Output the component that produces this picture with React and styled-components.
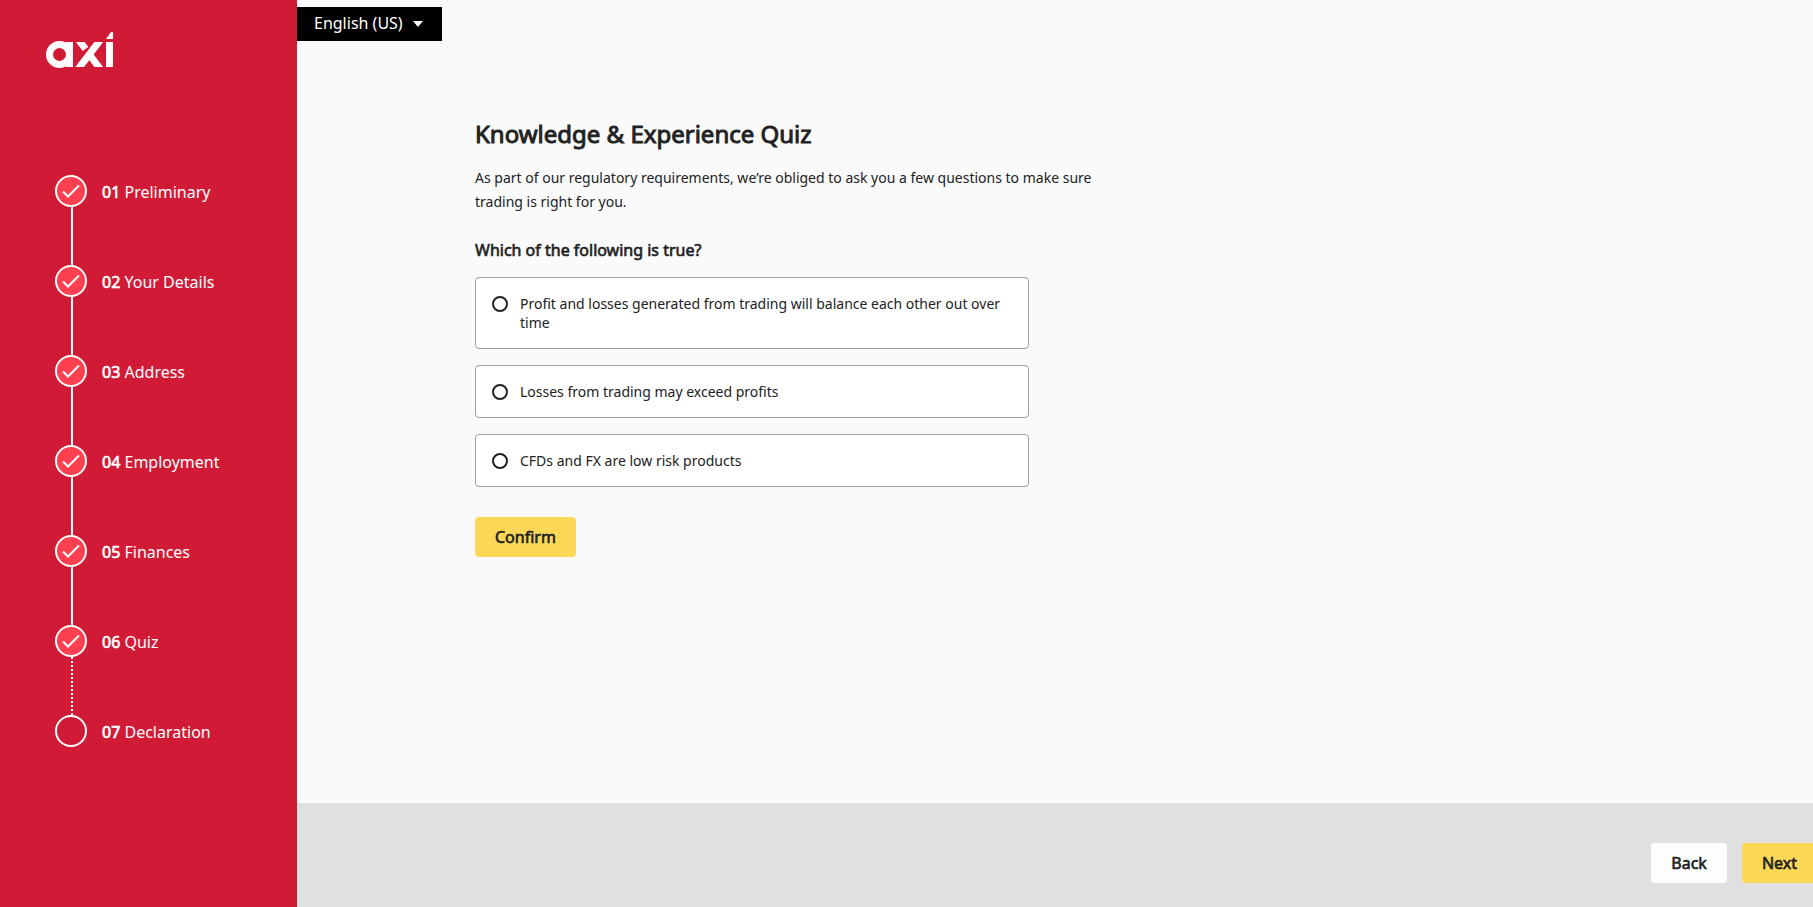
import React, { useState } from 'react';
import styled, { createGlobalStyle } from 'styled-components';

const color = {
  brand: '#d11b36',
  brandLight: '#ff4050',
  action: '#fdd756',
  text: '#222222',
  border: '#a0a0a0',
  page: '#fafafa',
  footer: '#e0e0e0',
};

const GlobalStyle = createGlobalStyle`
  * {
    box-sizing: border-box;
  }

  body {
    margin: 0;
    background: ${color.page};
    color: ${color.text};
    font-family: 'Noto Sans', sans-serif;
    font-size: 16px;
  }

  button, input, select {
    font-family: inherit;
    font-size: inherit;
  }
`;

const Page = styled.div`
  display: flex;
  min-height: 100vh;
  overflow: hidden;
`;

const Sidebar = styled.aside`
  flex: 0 0 297px;
  padding: 32px 45px;
  background: ${color.brand};
  color: #fff;
`;

const Logo = styled.svg`
  display: block;
  width: 70px;
  height: 37px;
`;

const StepList = styled.ol`
  margin: 0;
  padding: 106px 10px 0;
  list-style: none;
`;

const StepItem = styled.li`
  display: grid;
  grid-template-columns: 32px 1fr;
  column-gap: 15px;
`;

const StepMark = styled.span`
  display: flex;
  align-items: center;
  justify-content: center;
  width: 32px;
  height: 32px;
  border: 2px solid #fff;
  border-radius: 50%;
  background: ${props => (props.$done ? color.brandLight : 'transparent')};
`;

const StepLabel = styled.span`
  height: 32px;
  line-height: 34px;
`;

const StepLine = styled.span`
  height: 58px;
  margin-left: 16px;
  border-left: 2px ${props => (props.$dotted ? 'dotted' : 'solid')} #fff;
`;

const Strong = styled.span`
  -webkit-text-stroke: 0.04em currentColor;
`;

const Main = styled.main`
  flex: 1;
  min-width: 0;
  display: flex;
  flex-direction: column;
`;

const LanguageBar = styled.div`
  display: grid;
  align-self: flex-start;
  align-items: center;
  margin-top: 7px;
  background: #000;
  color: #fff;
`;

const LanguageSelect = styled.select`
  grid-area: 1 / 1;
  height: 34px;
  padding: 0 39px 2px 17px;
  border: 0;
  background: transparent;
  color: #fff;
  appearance: none;

  option {
    color: ${color.text};
  }
`;

const Caret = styled.svg`
  grid-area: 1 / 1;
  justify-self: end;
  width: 10px;
  height: 6px;
  margin-right: 19px;
  pointer-events: none;
`;

const Content = styled.section`
  flex: 1;
  width: 100%;
  max-width: 820px;
  padding: 76px 0 40px 178px;
`;

const Title = styled.h1`
  margin: 0;
  font-size: 24px;
  font-weight: 400;
  line-height: 34px;
`;

const Intro = styled.p`
  margin: 15px 0 0;
  font-size: 14px;
  line-height: 24px;
`;

const Question = styled.fieldset`
  display: flex;
  flex-direction: column;
  gap: 16px;
  max-width: 554px;
  margin: 24px 0 30px;
  padding: 0;
  border: 0;
`;

const QuestionText = styled.legend`
  margin-bottom: 15px;
  padding: 0;
  line-height: 24px;
`;

const Option = styled.label`
  display: flex;
  align-items: flex-start;
  gap: 12px;
  padding: 16px;
  border: 1px solid ${color.border};
  border-radius: 4px;
  background: #fff;
  font-size: 14px;
  line-height: 19px;
  cursor: pointer;
`;

const Radio = styled.input`
  flex: none;
  width: 16px;
  height: 16px;
  margin: 2px 0 0;
  border: 2px solid ${color.text};
  border-radius: 50%;
  appearance: none;

  &:checked {
    background: ${color.text};
    box-shadow: inset 0 0 0 2px #fff;
  }
`;

const Button = styled.button`
  height: 40px;
  padding: 0 20px;
  border: 0;
  border-radius: 4px;
  background: ${props => (props.$plain ? '#fdfdfc' : color.action)};
  color: ${color.text};
  cursor: pointer;
`;

const Footer = styled.footer`
  display: flex;
  justify-content: flex-end;
  gap: 15px;
  height: 104px;
  margin-right: -4px;
  padding-top: 40px;
  background: ${color.footer};
`;

const steps = [
  { title: 'Preliminary', done: true },
  { title: 'Your Details', done: true },
  { title: 'Address', done: true },
  { title: 'Employment', done: true },
  { title: 'Finances', done: true },
  { title: 'Quiz', done: true },
  { title: 'Declaration', done: false },
];

const answers = [
  'Profit and losses generated from trading will balance each other out over time',
  'Losses from trading may exceed profits',
  'CFDs and FX are low risk products',
];

const Step = ({ index, step }) => {
  const next = steps[index + 1];
  return (
    <StepItem>
      <StepMark $done={step.done}>
        {step.done && (
          <svg width="18" height="14" viewBox="0 0 18 14" fill="none" stroke="#fff" strokeWidth="2">
            <path d="M1 7.5L6 12.5L17 1.5" />
          </svg>
        )}
      </StepMark>
      <StepLabel><Strong>0{index + 1}</Strong> {step.title}</StepLabel>
      {next && <StepLine $dotted={!next.done} />}
    </StepItem>
  );
};

const App = () => {
  const [answer, setAnswer] = useState(null);

  return (
    <>
      <GlobalStyle />
      <Page>
        <Sidebar>
          <Logo viewBox="0 0 70 37" role="img" aria-label="axi" fill="none" stroke="#fff" strokeWidth="7">
            <clipPath id="logo-band">
              <rect x="0" y="10" width="70" height="25" />
            </clipPath>
            <circle cx="14.5" cy="22.5" r="10" />
            <line x1="24.5" y1="10" x2="24.5" y2="35" />
            <g clipPath="url(#logo-band)">
              <line x1="32" y1="38.5" x2="56.5" y2="6.5" />
              <line x1="33" y1="7" x2="40.5" y2="17" />
              <line x1="44" y1="22" x2="56" y2="38" />
            </g>
            <line x1="64.5" y1="10" x2="64.5" y2="35" />
            <polygon points="61,7 66,0 68,0 68,7" fill="#fff" stroke="none" />
          </Logo>
          <StepList>
            {steps.map((step, i) => (
              <Step key={step.title} index={i} step={step} />
            ))}
          </StepList>
        </Sidebar>

        <Main>
          <LanguageBar>
            <LanguageSelect aria-label="Language">
              <option>English (US)</option>
            </LanguageSelect>
            <Caret viewBox="0 0 10 6"><path d="M0 0H10L5 6Z" fill="#fff" /></Caret>
          </LanguageBar>

          <Content>
            <Title><Strong>Knowledge &amp; Experience Quiz</Strong></Title>
            <Intro>
              As part of our regulatory requirements, we’re obliged to ask you a few questions to make sure trading is right for you.
            </Intro>
            <Question>
              <QuestionText><Strong>Which of the following is true?</Strong></QuestionText>
              {answers.map((text, i) => (
                <Option key={text} htmlFor={`answer-${i}`}>
                  <Radio
                    type="radio"
                    id={`answer-${i}`}
                    name="answer"
                    checked={answer === i}
                    onChange={() => setAnswer(i)}
                  />
                  {text}
                </Option>
              ))}
            </Question>
            <Button type="button"><Strong>Confirm</Strong></Button>
          </Content>

          <Footer>
            <Button type="button" $plain><Strong>Back</Strong></Button>
            <Button type="button"><Strong>Next</Strong></Button>
          </Footer>
        </Main>
      </Page>
    </>
  );
};

export default App;
